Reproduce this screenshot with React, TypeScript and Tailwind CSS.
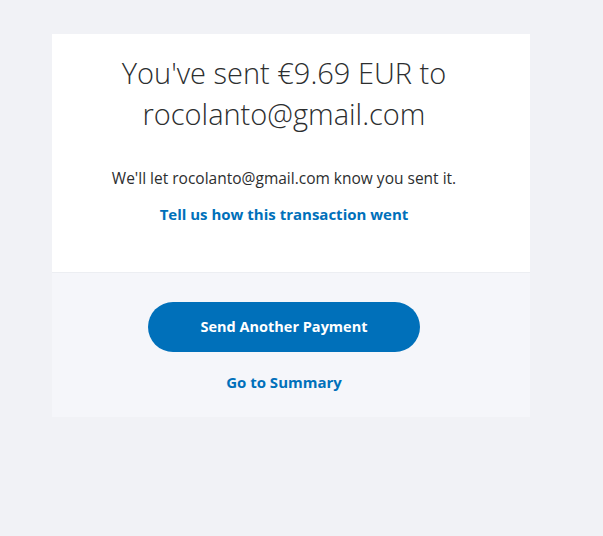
export default function App() {
  return (
    <div
      className="min-h-screen bg-[#f1f2f6] pt-[34px] pl-[52px]"
      style={{ fontFamily: "'Open Sans', 'Noto Sans', sans-serif" }}
    >
      <div className="w-[478px]">
        {/* Top */}
        <div className="bg-white pl-[20px] pr-[34px] pt-[18px] pb-[48px] flex flex-col items-center text-center">
          <h1 className="text-[29px] leading-[41px] font-light text-[#2c2e2f]">
            You've sent €9.69 EUR to
            <br />
            rocolanto@gmail.com
          </h1>
          <p className="mt-[34px] text-[15.5px] leading-[20px] text-[#2c2e2f]">
            We'll let rocolanto@gmail.com know you sent it.
          </p>
          <a className="mt-[16px] text-[15px] leading-[20px] font-bold text-[#0070ba] cursor-pointer">
            Tell us how this transaction went
          </a>
        </div>

        {/* Bottom */}
        <div className="bg-[#f5f6fa] border-t border-[#eceef2] pl-[20px] pr-[34px] pt-[29px] pb-[25px] flex flex-col items-center">
          <button className="w-[272px] h-[50px] rounded-full bg-[#0070ba] text-white text-[14.5px] font-bold">
            Send Another Payment
          </button>
          <a className="mt-[20px] text-[15px] leading-[20px] font-bold text-[#0070ba] cursor-pointer">
            Go to Summary
          </a>
        </div>
      </div>
    </div>
  );
}
